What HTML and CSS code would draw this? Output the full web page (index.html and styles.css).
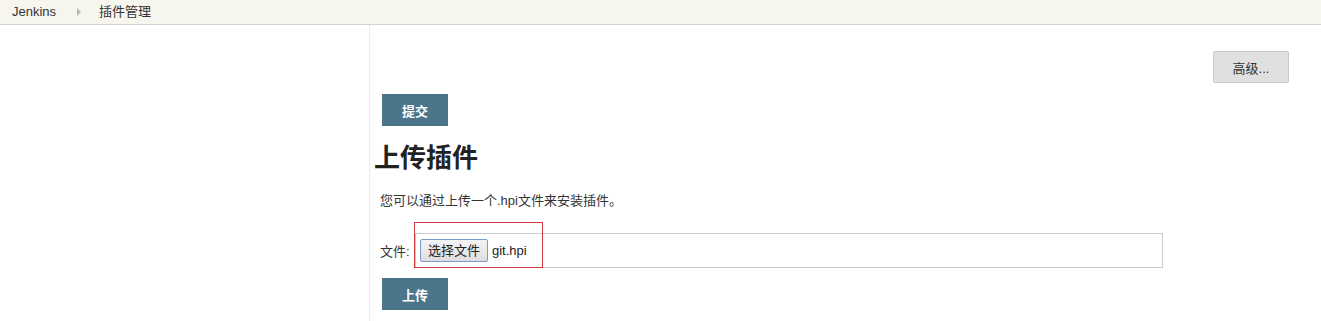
FILE: index.html
```html
<!DOCTYPE html>
<html lang="zh">
<head>
<meta charset="utf-8">
<title>插件管理 [Jenkins]</title>
<link rel="stylesheet" href="styles.css">
</head>
<body>
<div class="breadcrumbs">
  <a class="crumb" href="#">Jenkins</a>
  <span class="sep"></span>
  <a class="crumb" href="#">插件管理</a>
</div>
<div class="page">
  <div class="side"></div>
  <div class="main">
    <div class="top-row">
      <button class="btn-grey">高级...</button>
    </div>
    <button class="btn-primary submit">提交</button>
    <h1 class="title">上传插件</h1>
    <p class="desc">您可以通过上传一个.hpi文件来安装插件。</p>
    <div class="file-row">
      <span class="file-label">文件:</span>
      <div class="file-box">
        <span class="file-btn">选择文件</span>
        <span class="file-name">git.hpi</span>
      </div>
      <div class="highlight"></div>
    </div>
    <button class="btn-primary upload">上传</button>
  </div>
</div>
</body>
</html>
```
FILE: styles.css
```css
html, body {
  margin: 0;
  padding: 0;
  background: #fff;
  font-family: "Liberation Sans", "Noto Sans CJK SC", sans-serif;
  color: #333;
}
.breadcrumbs {
  height: 24px;
  background: #f6f6ee;
  border-bottom: 1px solid #d3d3cc;
  display: flex;
  align-items: center;
  padding-left: 12px;
  font-size: 13px;
}
.crumb {
  color: #333;
  text-decoration: none;
  line-height: 24px;
}
.sep {
  width: 0;
  height: 0;
  border-left: 4px solid #b8b8b0;
  border-top: 4px solid transparent;
  border-bottom: 4px solid transparent;
  margin: 0 18px 0 21px;
}
.page {
  display: flex;
  min-height: 296px;
}
.side {
  width: 369px;
  border-right: 1px solid #ececec;
  flex: none;
}
.main {
  flex: 1;
  padding-left: 4px;
  position: relative;
}
.top-row {
  display: flex;
  justify-content: flex-end;
  padding-top: 26px;
  padding-right: 32px;
}
.btn-grey {
  width: 76px;
  height: 32px;
  background: #e0e0e0;
  border: 1px solid #c8c8c8;
  border-radius: 2px;
  font-family: inherit;
  font-size: 13px;
  font-weight: normal;
  color: #333;
  padding: 0;
}
.btn-primary {
  display: block;
  width: 66px;
  height: 32px;
  background: #4b758b;
  border: none;
  color: #fff;
  font-family: inherit;
  font-size: 13px;
  font-weight: bold;
  padding: 0;
  margin-left: 8px;
}
.submit {
  margin-top: 11px;
}
.title {
  margin: 14px 0 0 0;
  font-size: 26px;
  font-weight: bold;
  line-height: 36px;
  color: #222;
}
.desc {
  margin: 16px 0 0 6px;
  font-size: 13px;
  line-height: 18px;
  color: #333;
}
.file-row {
  display: flex;
  align-items: center;
  margin-top: 23px;
  margin-left: 6px;
  position: relative;
  width: 783px;
}
.file-label {
  font-size: 13px;
  width: 35px;
  flex: none;
}
.file-box {
  flex: 1;
  height: 33px;
  border: 1px solid #cccccc;
  display: flex;
  align-items: center;
  padding-left: 4px;
}
.file-btn {
  height: 21px;
  width: 66px;
  border: 1px solid #7a9cc9;
  border-radius: 2px;
  background: linear-gradient(#f4f4f4, #dedede);
  font-size: 13px;
  line-height: 21px;
  text-align: center;
  color: #222;
}
.file-name {
  margin-left: 4px;
  font-size: 13px;
  color: #222;
}
.highlight {
  position: absolute;
  left: 34px;
  top: -11px;
  width: 127px;
  height: 44px;
  border: 1px solid #d0393f;
  pointer-events: none;
}
.upload {
  margin-top: 10px;
}
```
